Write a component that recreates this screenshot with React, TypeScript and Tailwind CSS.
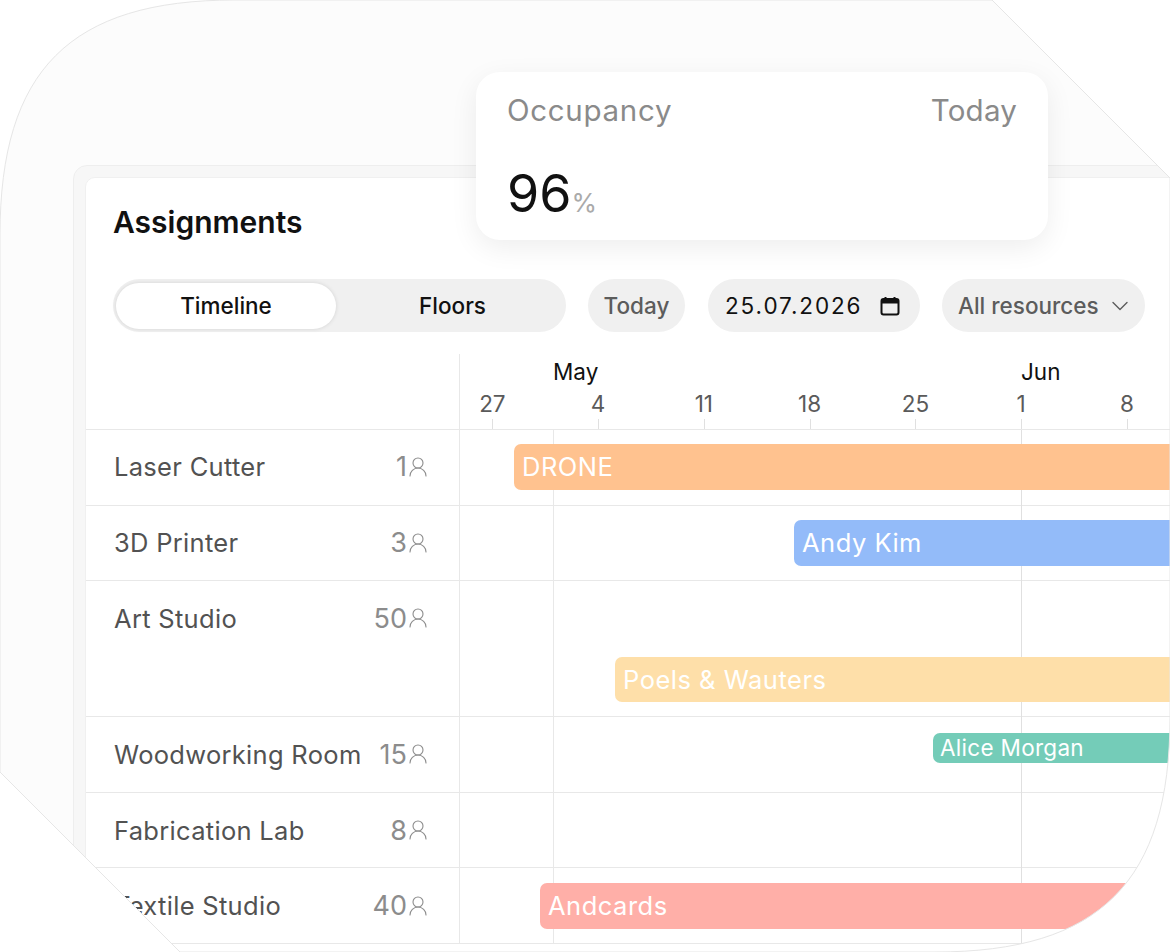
import React from 'react';
import { ChevronDown, UserRound } from 'lucide-react';

const ticks = ['27', '4', '11', '18', '25', '1', '8'];

const rows = [
  { name: 'Laser Cutter', count: '1', h: 'h-[76px]', pad: '', top: 'mt-[14px]', bar: { label: 'DRONE', cls: 'ml-[54px] h-[46px] pt-[1px] pl-[8px] bg-[#ffc28f] text-[25.5px] tracking-[0.5px]' } },
  { name: '3D Printer', count: '3', h: 'h-[75px]', pad: '', top: 'mt-[14px]', bar: { label: 'Andy Kim', cls: 'ml-[334px] h-[46px] pt-[1px] pl-[8px] bg-[#93bbf9] text-[25.5px] tracking-[0.5px]' } },
  { name: 'Art Studio', count: '50', h: 'h-[136px]', pad: 'pt-[1px]', top: 'mt-[76px]', bar: { label: 'Poels & Wauters', cls: 'ml-[155px] h-[45px] pt-[1px] pl-[8px] bg-[#fedfa9] text-[25.5px] tracking-[0.5px]' } },
  { name: 'Woodworking Room', count: '15', h: 'h-[76px]', pad: 'pt-[1px]', top: 'mt-[16px]', bar: { label: 'Alice Morgan', cls: 'ml-[473px] h-[30px] pl-[7px] bg-[#74ccb8] text-[22.5px] tracking-[0.3px]' } },
  { name: 'Fabrication Lab', count: '8', h: 'h-[75px]', pad: 'pt-[1px]', top: '', bar: null },
  { name: 'Textile Studio', count: '40', h: 'h-[76px]', pad: 'pt-[2px]', top: 'mt-[15px]', bar: { label: 'Andcards', cls: 'ml-[80px] h-[46px] pt-[1px] pl-[8px] bg-[#ffafa8] text-[25.5px] tracking-[0.5px]' } },
];

const CalendarIcon = () => (
  <svg width="20" height="20" viewBox="0 0 20 20" fill="none" className="text-[#111]">
    <rect x="1.5" y="3" width="17" height="15.5" rx="2" stroke="currentColor" strokeWidth="2" />
    <path d="M2 3.5h16v4H2z" fill="currentColor" />
    <path d="M5.5 1v3M14.5 1v3" stroke="currentColor" strokeWidth="2" />
  </svg>
);

const Row: React.FC<{ row: (typeof rows)[number] }> = ({ row }) => (
  <div className={`flex border-b border-[#e8e8e8] ${row.h}`}>
    <div className="w-[374px] shrink-0 border-r border-[#e8e8e8] pl-[28px] pr-[29px]">
      <div className={`h-[75px] flex items-center justify-between ${row.pad}`}>
        <span className="text-[25.5px] tracking-[0.3px] text-[#525252]">{row.name}</span>
        <span className="flex items-center text-[27px] text-[#8c8c8c]">
          {row.count}
          <UserRound size={24} strokeWidth={1.1} className="text-[#8c8c8c] -mt-[2px] -ml-[1px]" />
        </span>
      </div>
    </div>
    <div className="flex-1 min-w-0 relative">
      {row.bar && (
        <div className={`${row.top} ${row.bar.cls} w-[900px] rounded-l-[7px] flex items-center text-white`}>
          {row.bar.label}
        </div>
      )}
    </div>
  </div>
);

export default function App() {
  return (
    <div className="relative w-[1170px] h-[952px] overflow-hidden bg-white font-['Inter',sans-serif]">
      <div className="h-full bg-[#fcfcfc] pl-[73px] pt-[165px] [clip-path:path('M0_235C0_70_70_0_235_0L992_0L1170_178L1170_717C1170_882_1100_952_935_952L180_952L0_772Z')]">
        <div className="w-[1200px] h-[900px] bg-[#f7f7f7] border border-[#eeeeee] rounded-tl-[14px] pl-[11px] pt-[11px]">
          <div className="h-full bg-white border border-[#f0f0f0] rounded-tl-[10px]">
            <div className="h-[101px] pt-[28px] pl-[27px]">
              <h2 className="text-[30px] leading-[32px] font-semibold text-[#111]">Assignments</h2>
            </div>

            <div className="flex items-center pl-[27px] h-[53px] text-[22.5px]">
              <div className="w-[453px] h-[53px] rounded-full bg-[#f0f0f0] p-[3px] flex items-center font-medium text-[#111]">
                <div className="w-[220px] h-[46px] rounded-full bg-white shadow-[0_0_4px_rgba(0,0,0,0.12)] flex items-center justify-center">Timeline</div>
                <div className="flex-1 pl-[6px] flex items-center justify-center">Floors</div>
              </div>
              <div className="ml-[22px] w-[97px] h-[53px] rounded-full bg-[#f0f0f0] flex items-center justify-center text-[#5c5c5c] font-medium">Today</div>
              <div className="ml-[23px] w-[212px] h-[53px] rounded-full bg-[#f0f0f0] flex items-center justify-between pl-[17px] pr-[20px] text-[#111] tracking-[1.9px]">
                <span>25.07.2026</span>
                <CalendarIcon />
              </div>
              <div className="ml-[22px] w-[203px] h-[53px] rounded-full bg-[#f0f0f0] flex items-center justify-between pl-[16px] pr-[11px] text-[#5c5c5c] font-medium">
                <span>All resources</span>
                <ChevronDown size={28} strokeWidth={1.2} />
              </div>
            </div>

            <div className="flex mt-[22px] h-[76px] border-b border-[#e8e8e8]">
              <div className="w-[374px] shrink-0 border-r border-[#e8e8e8]" />
              <div className="flex-1 min-w-0 pt-[3px]">
                <div className="flex h-[30px] items-center text-[22.5px] text-[#111]">
                  <span className="ml-[93px] w-[468px]">May</span>
                  <span>Jun</span>
                </div>
                <div className="flex -ml-[20px] mt-[2px]">
                  {ticks.map((t) => (
                    <div key={t} className="w-[105.75px] shrink-0 flex flex-col items-center">
                      <span className="text-[22.5px] leading-[30px] pr-[1px] text-[#5a5a5a]">{t}</span>
                      <span className="block w-px h-[10px] bg-[#e0e0e0]" />
                    </div>
                  ))}
                </div>
              </div>
            </div>

            <div className="relative">
              <div className="absolute left-[467px] top-0 bottom-0 w-px bg-[#e8e8e8]" />
              <div className="absolute left-[935px] top-0 bottom-0 w-px bg-[#e0e0e0]" />
              {rows.map((row) => (
                <Row key={row.name} row={row} />
              ))}
            </div>
          </div>
        </div>
      </div>

      <svg className="absolute inset-0 pointer-events-none" width="1170" height="952" fill="none">
        <path d="M0 235C0 70 70 0 235 0L992 0L1170 178L1170 717C1170 882 1100 952 935 952L180 952L0 772Z" stroke="#e6e6e6" strokeWidth="1" />
      </svg>

      <div className="absolute left-[476px] top-[72px] w-[572px] h-[168px] rounded-[24px] bg-white shadow-[0_8px_28px_rgba(0,0,0,0.07)] pl-[31px] pr-[31px] pt-[20px]">
        <div className="flex justify-between text-[29.5px] leading-[36px] tracking-[0.7px] text-[#8a8a8a]">
          <span>Occupancy</span>
          <span className="tracking-[0.2px]">Today</span>
        </div>
        <div className="mt-[34px] flex items-baseline">
          <span className="text-[52px] leading-[64px] text-[#111]">96</span>
          <span className="text-[26px] text-[#aaaaaa]">%</span>
        </div>
      </div>
    </div>
  );
}
